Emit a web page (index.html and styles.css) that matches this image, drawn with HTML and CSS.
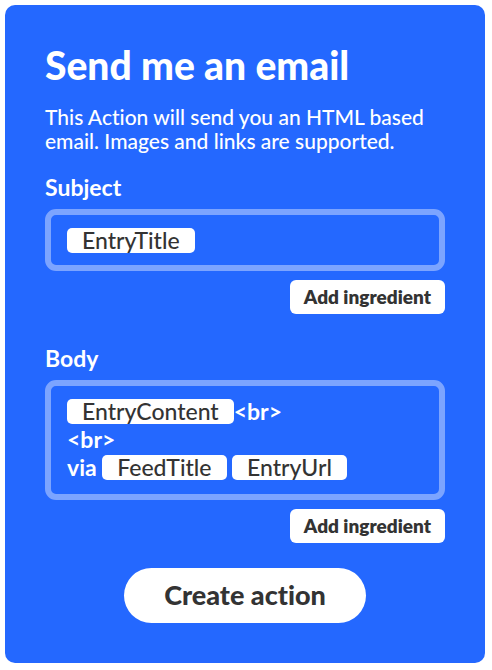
FILE: index.html
```html
<!DOCTYPE html>
<html lang="en">
<head>
  <meta charset="utf-8">
  <meta name="viewport" content="width=device-width, initial-scale=1">
  <title>Send me an email</title>
  <link rel="stylesheet" href="styles.css">
</head>
<body>
  <form class="card">
    <h1 class="title">Send me an email</h1>
    <p class="description">This Action will send you an HTML based email. Images and links are supported.</p>

    <div class="field">
      <label class="label" id="subject-label">Subject</label>
      <div class="editor" role="textbox" contenteditable="true" spellcheck="false" aria-labelledby="subject-label"><span class="chip">EntryTitle</span></div>
      <button class="add" type="button">Add ingredient</button>
    </div>

    <div class="field">
      <label class="label" id="body-label">Body</label>
      <div class="editor editor-body" role="textbox" aria-multiline="true" contenteditable="true" spellcheck="false" aria-labelledby="body-label"><span class="chip">EntryContent</span>&lt;br&gt;<br>&lt;br&gt;<br>via <span class="chip">FeedTitle</span> <span class="chip">EntryUrl</span></div>
      <button class="add" type="button">Add ingredient</button>
    </div>

    <button class="submit" type="submit">Create action</button>
  </form>
</body>
</html>
```
FILE: styles.css
```css
* {
  box-sizing: border-box;
}

body {
  margin: 0;
  padding: 5px 7px 7px 5px;
  background: #fff;
  color: #fff;
  font-family: Lato, "Liberation Sans", sans-serif;
  font-variant-ligatures: none;
}

.card {
  display: flex;
  flex-direction: column;
  padding: 36px 40px 40px;
  border-radius: 10px;
  background: #2468ff;
}

.title {
  margin: 0;
  font-size: 39px;
  font-weight: 900;
  line-height: 48px;
}

.description {
  margin: 16px 0 20px;
  font-size: 21px;
  font-weight: 500;
  line-height: 24px;
}

.field {
  display: flex;
  flex-direction: column;
  margin-bottom: 30px;
}

.field:last-of-type {
  margin-bottom: 25px;
}

.label {
  margin-bottom: 8px;
  font-size: 23px;
  font-weight: 700;
  line-height: 28px;
}

.editor {
  padding: 11px 16px;
  border: 6px solid #7ca4ff;
  border-radius: 11px;
  outline: none;
  font-size: 23px;
  font-weight: 700;
  line-height: 28px;
}

.editor-body {
  padding-bottom: 13px;
}

.chip {
  display: inline-block;
  padding: 0 15px;
  border-radius: 5px;
  background: #fff;
  color: #333;
  font-weight: 500;
  line-height: 25px;
}

.add,
.submit {
  border: 0;
  background: #fff;
  color: #333;
  font-family: inherit;
  font-variant-ligatures: inherit;
  cursor: pointer;
}

.add {
  align-self: flex-end;
  margin-top: 9px;
  padding: 5px 14px;
  border-radius: 6px;
  font-size: 19px;
  font-weight: 800;
  line-height: 24px;
}

.submit {
  align-self: center;
  padding: 12px 40px 13px;
  border-radius: 28px;
  font-size: 27px;
  font-weight: 900;
  line-height: 30px;
}
```
